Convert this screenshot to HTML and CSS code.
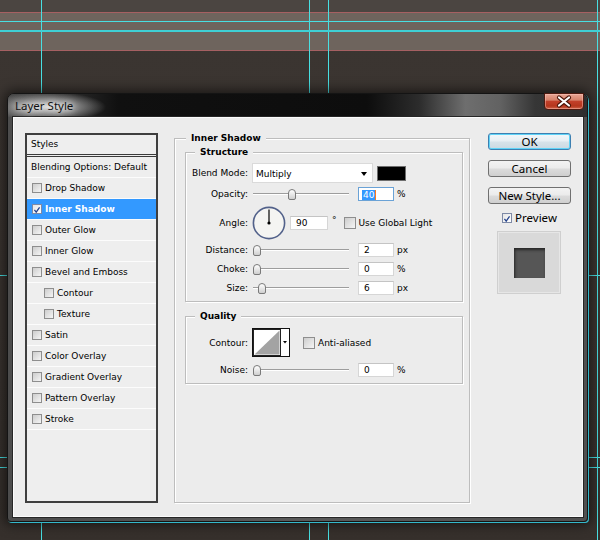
FILE: index.html
```html
<!DOCTYPE html>
<html lang="en">
<head>
  <meta charset="UTF-8" />
  <title>Layer Style</title>
  <link rel="stylesheet" href="styles.css">
</head>
<body>
  <div class="canvas">
    <div class="strip"></div>
    <div class="band"></div>
    <div class="guide v v1"></div>
    <div class="guide v v2"></div>
    <div class="guide v v3"></div>
    <div class="guide v v4"></div>
    <div class="guide h h1"></div>
    <div class="guide h h2"></div>
    <div class="guide h h3"></div>
    <div class="guide h h4"></div>
    <div class="guide h h5"></div>

    <div class="dialog">
      <div class="titlebar">
        <span class="title">Layer Style</span>
        <button class="close">
          <svg width="38" height="15" viewBox="0 0 38 15">
            <path d="M14 3.5 L24 11.5 M24 3.5 L14 11.5" stroke="#4a1408" stroke-width="4.2" stroke-linecap="round"/>
            <path d="M14 3.5 L24 11.5 M24 3.5 L14 11.5" stroke="#fff" stroke-width="2.2" stroke-linecap="round"/>
          </svg>
        </button>
      </div>
      <div class="frame">
        <div class="content">
          <!-- left list of effects -->
          <div class="styles-panel">
            <div class="styles-head">Styles</div>
            <div class="row">Blending Options: Default</div>
            <div class="row"><span class="cb"></span>Drop Shadow</div>
            <div class="row selected"><span class="cb on"><svg width="10" height="10" viewBox="0 0 10 10"><path d="M1.8 4.8 L4 7.6 L8.2 1.6" stroke="#23418c" stroke-width="1.6" fill="none"/></svg></span>Inner Shadow</div>
            <div class="row"><span class="cb"></span>Outer Glow</div>
            <div class="row"><span class="cb"></span>Inner Glow</div>
            <div class="row"><span class="cb"></span>Bevel and Emboss</div>
            <div class="row sub"><span class="cb"></span>Contour</div>
            <div class="row sub"><span class="cb"></span>Texture</div>
            <div class="row"><span class="cb"></span>Satin</div>
            <div class="row"><span class="cb"></span>Color Overlay</div>
            <div class="row"><span class="cb"></span>Gradient Overlay</div>
            <div class="row"><span class="cb"></span>Pattern Overlay</div>
            <div class="row"><span class="cb"></span>Stroke</div>
          </div>

          <!-- settings of the selected effect -->
          <fieldset class="group outer">
            <legend>Inner Shadow</legend>
            <fieldset class="group inner">
              <legend>Structure</legend>
              <div class="field blend">
                <label>Blend Mode:</label>
                <div class="select">Multiply<span class="arrow"></span></div>
                <span class="swatch"></span>
              </div>
              <div class="field mt4">
                <label>Opacity:</label>
                <div class="slider"><span class="knob" style="margin-left:35px"></span></div>
                <span class="num focus"><span class="sel">40</span></span>
                <span class="unit">%</span>
              </div>
              <div class="field angle mt5">
                <label>Angle:</label>
                <svg class="dial" width="34" height="34" viewBox="0 0 34 34">
                  <circle cx="17" cy="17" r="15.6" fill="#f4f4f2" stroke="#52618a" stroke-width="1.6"/>
                  <line x1="17" y1="17" x2="17" y2="3.5" stroke="#000" stroke-width="1.2"/>
                  <circle cx="17" cy="17" r="1.6" fill="#000"/>
                </svg>
                <span class="num wide">90</span>
                <span class="deg">°</span>
                <span class="cb big"></span>
                <span class="cb-text">Use Global Light</span>
              </div>
              <div class="field mt3">
                <label>Distance:</label>
                <div class="slider"><span class="knob"></span></div>
                <span class="num">2</span>
                <span class="unit">px</span>
              </div>
              <div class="field mt5">
                <label>Choke:</label>
                <div class="slider"><span class="knob"></span></div>
                <span class="num">0</span>
                <span class="unit">%</span>
              </div>
              <div class="field mt5">
                <label>Size:</label>
                <div class="slider"><span class="knob" style="margin-left:5px"></span></div>
                <span class="num">6</span>
                <span class="unit">px</span>
              </div>
            </fieldset>

            <fieldset class="group inner quality">
              <legend>Quality</legend>
              <div class="field mt6">
                <label>Contour:</label>
                <svg class="contour" width="38" height="29" viewBox="0 0 38 29">
                  <rect x="0.5" y="0.5" width="37" height="28" fill="#fff" stroke="#111"/>
                  <rect x="1.5" y="1.5" width="27" height="26" fill="none" stroke="#222"/>
                  <polygon points="2.5,26.5 27.5,2.5 27.5,26.5" fill="#a3a3a3"/>
                  <polygon points="31,13 35,13 33,15.5" fill="#000"/>
                </svg>
                <span class="cb big gap"></span>
                <span class="cb-text">Anti-aliased</span>
              </div>
              <div class="field mt6">
                <label>Noise:</label>
                <div class="slider"><span class="knob"></span></div>
                <span class="num">0</span>
                <span class="unit">%</span>
              </div>
            </fieldset>
          </fieldset>

          <!-- buttons and preview -->
          <div class="actions">
            <button class="btn default">OK</button>
            <button class="btn">Cancel</button>
            <button class="btn">New Style...</button>
            <div class="preview-row">
              <span class="cb on"><svg width="10" height="10" viewBox="0 0 10 10"><path d="M1.8 4.8 L4 7.6 L8.2 1.6" stroke="#23418c" stroke-width="1.6" fill="none"/></svg></span>
              <span>Preview</span>
            </div>
            <div class="preview"><span class="sample"></span></div>
          </div>
        </div>
      </div>
    </div>
  </div>
</body>
</html>
```

FILE: styles.css
```css
* {
  box-sizing: border-box;
}
body {
  margin: 0;
  background: #39332f;
  font-family: "DejaVu Sans", Tahoma, sans-serif;
  font-size: 9px;
  color: #000;
}
.canvas {
  position: relative;
  width: 600px;
  height: 540px;
  overflow: hidden;
  background: linear-gradient(#3b3531 0, #3a3430 60%, #36302c 100%);
}
.strip {
  height: 12px;
  background: #4b4541;
}
.band {
  height: 39px;
  background: #6e645d;
  border-top: 1px solid #a66062;
  border-bottom: 1px solid #a66062;
}

/* photoshop guides */
.guide {
  position: absolute;
  background: #48dfe2;
}
.guide.v { top: 0; bottom: 0; width: 1px; }
.guide.h { left: 0; right: 0; height: 1px; }
.v1 { left: 41px; }
.v2 { left: 309px; }
.v3 { left: 328px; }
.v4 { left: 597px; }
.h1 { top: 21px; }
.h2 { top: 30px; height: 2px !important; background: #3fcfd4; }
.h3 { top: 275px; }
.h4 { top: 457px; }
.h5 { top: 467px; }

/* window */
.dialog {
  position: relative;
  z-index: 1;
  width: 581px;
  height: 429px;
  margin: 42px 0 0 7px;
  border: 1px solid #141414;
  border-radius: 7px 7px 4px 4px;
  background: linear-gradient(90deg, #4c4c4c, #5a5a5a 50%, #505050);
  box-shadow: 1px 1px 0 #34b8ca, 0 0 12px 3px rgba(0,0,0,.55);
}
.titlebar {
  height: 23px;
  display: flex;
  justify-content: space-between;
  align-items: flex-start;
  padding: 0 3px 0 7px;
  border-radius: 6px 6px 0 0;
  background:
    radial-gradient(ellipse 58px 15px at 40px 13px, rgba(235,235,235,.9), rgba(170,170,170,.55) 60%, rgba(0,0,0,0) 100%),
    linear-gradient(90deg, #4a4a4a 0%, #2c2c2c 10%, #101010 19%, #0d0d0d 62%, #2c2c2c 71%, #6e6e6e 79%, #626262 85%, #363636 91%, #2e2e2e 100%);
}
.title {
  font-family: "Noto Sans", "Open Sans", sans-serif;
  font-size: 11.5px;
  line-height: 23px;
  color: #111;
  text-shadow: 0 0 6px #fff, 0 0 10px rgba(255,255,255,.8);
}
.close {
  width: 40px;
  height: 17px;
  margin-top: -1px;
  padding: 0;
  border: 1px solid #4d1a10;
  border-radius: 0 0 4px 4px;
  background: linear-gradient(#e7a594 0%, #d7836c 40%, #c2402a 50%, #b5361d 80%, #cf654a 100%);
  box-shadow: inset 0 0 0 1px rgba(255,200,190,.45);
  display: flex;
  align-items: center;
  justify-content: center;
}
.frame {
  padding: 0 4px 4px 5px;
}
.content {
  height: 400px;
  display: flex;
  padding: 14px 11px 0 11px;
  background: #ececec;
  border: 1px solid #fbfbfb;
  box-shadow: 0 0 0 1px #262626;
}

/* left list */
.styles-panel {
  flex: none;
  width: 133px;
  height: 370px;
  margin: 1px 16px 0 0;
  border: 2px solid #3e3e3e;
  background: #eeeeee;
}
.styles-head {
  height: 22px;
  line-height: 19px;
  padding-left: 4px;
  border-bottom: 3px double #3a3a3a;
}
.row {
  height: 21px;
  display: flex;
  align-items: center;
  padding-left: 5px;
  border-bottom: 1px solid #fcfcfc;
  white-space: nowrap;
}
.row:nth-child(2) {
  padding-left: 4px;
}
.row.sub {
  padding-left: 17px;
}
.row.selected {
  background: #3399ff;
  color: #fff;
  font-weight: bold;
}
.cb {
  flex: none;
  width: 10px;
  height: 10px;
  margin-right: 3px;
  border: 1px solid #8e8e8e;
  background: linear-gradient(135deg, #cdcdcd, #f5f5f5);
  display: flex;
}
.cb.on {
  background: linear-gradient(135deg, #e6e6e6, #ffffff);
  border-color: #7e8aa6;
}
.cb.big {
  width: 12px;
  height: 12px;
}

/* group boxes */
fieldset.group {
  margin: 0;
  padding: 0 0 6px 0;
  min-inline-size: 0;
  border: 1px solid #bdbdbd;
  box-shadow: inset 1px 1px 0 #fff, 1px 1px 0 #fff;
}
fieldset.group legend {
  font-weight: bold;
  line-height: 12px;
  padding: 0 5px;
  margin-left: 11px;
  background: #ececec;
}
fieldset.outer {
  flex: none;
  width: 296px;
  height: 371px;
  margin-right: 18px;
}
fieldset.inner {
  margin: 2px 6px 0 10px;
}
fieldset.inner legend {
  margin-left: 9px;
}
fieldset.quality {
  margin-top: 8px;
}

.field {
  display: flex;
  align-items: center;
  white-space: nowrap;
}
.field label {
  flex: none;
  width: 62px;
  margin-right: 4px;
  text-align: right;
}
.field.blend { margin-top: 5px; }
.mt3 { margin-top: 3px; }
.mt4 { margin-top: 4px; }
.mt5 { margin-top: 5px; }
.mt6 { margin-top: 6px; }

.select {
  width: 121px;
  height: 20px;
  display: flex;
  align-items: center;
  justify-content: space-between;
  padding: 1px 5px 0 3px;
  background: #fff;
  border: 1px solid #dadada;
}
.arrow {
  width: 0;
  height: 0;
  border-left: 3.5px solid transparent;
  border-right: 3.5px solid transparent;
  border-top: 4px solid #000;
}
.swatch {
  width: 29px;
  height: 15px;
  margin-left: 4px;
  background: #000;
  border: 1px solid #6e6e6e;
}
.slider {
  flex: none;
  width: 96px;
  height: 14px;
  margin: 0 9px 0 1px;
  display: flex;
  align-items: center;
  background:
    linear-gradient(#9d9d9d, #9d9d9d) 0 6px / 100% 1px no-repeat,
    linear-gradient(#fff, #fff) 0 7px / 100% 1px no-repeat;
}
.knob {
  width: 8px;
  height: 11px;
  border: 1px solid #7a7a7a;
  border-radius: 4px 4px 2px 2px;
  background: linear-gradient(#ffffff, #cfcfcf);
}
.num {
  flex: none;
  width: 36px;
  height: 14px;
  padding-left: 5px;
  line-height: 12px;
  background: #fff;
  border: 1px solid #d6d6d6;
  border-top-color: #c4c4c4;
}
.num.focus {
  padding-left: 3px;
  padding-top: 1px;
  border-color: #6aa2d6;
}
.sel {
  display: inline-block;
  height: 10px;
  line-height: 10px;
  padding: 0 1px;
  background: #3399ff;
  color: #fff;
  border-right: 1px solid #ff7a1a;
}
.num.wide {
  width: 38px;
  margin-left: 4px;
}
.unit {
  margin-left: 3px;
}
.deg {
  align-self: flex-start;
  margin: 9px 7px 0 4px;
}
.cb.gap {
  margin-left: 13px;
}

/* right column */
.actions {
  flex: none;
  width: 83px;
  margin-top: 1px;
  display: flex;
  flex-direction: column;
}
.btn {
  height: 17px;
  margin: 0 0 10px 0;
  padding: 0;
  border: 1px solid #707070;
  border-radius: 3px;
  background: linear-gradient(#f3f3f3 0%, #ebebeb 48%, #dcdcdc 52%, #cfcfcf 100%);
  font-family: "Noto Sans", "Open Sans", sans-serif;
  font-size: 11.5px;
  line-height: 14px;
  color: #000;
}
.btn.default {
  border-color: #3c7fb1;
  box-shadow: inset 0 0 0 1px #5fd3f7;
  background: linear-gradient(#f2f7fa 0%, #e6eef3 48%, #d7e3ea 52%, #cad9e2 100%);
}
.preview-row {
  margin-top: -3px;
  height: 13px;
  display: flex;
  align-items: center;
  justify-content: center;
  font-family: "Noto Sans", "Open Sans", sans-serif;
  font-size: 11.5px;
}
.preview {
  width: 62px;
  height: 61px;
  margin: 8px 0 0 10px;
  display: flex;
  align-items: center;
  justify-content: center;
  background: #d9d9d9;
  border: 1px solid #e6e6e6;
  box-shadow: 0 0 0 1px #cfcfcf;
}
.sample {
  width: 31px;
  height: 30px;
  background: #565656;
  box-shadow: inset 1px 2px 3px #262626;
}
```
